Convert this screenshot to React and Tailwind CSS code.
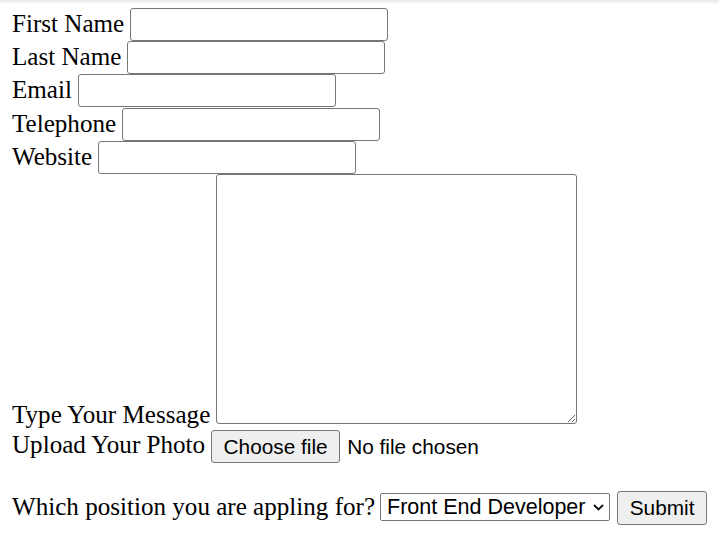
import React from 'react';

const serif = "font-['Liberation_Serif','Times_New_Roman',serif]";
const sans = "font-['Liberation_Sans',Arial,sans-serif]";

// Text fields: label + input on one line
const fields = ['First Name', 'Last Name', 'Email', 'Telephone', 'Website'];

export default function App() {
  return (
    <div className={`min-h-screen bg-white pl-[12px] pt-[8px] text-[25.1px] leading-[1.149] text-black ${serif} shadow-[inset_0_4px_4px_-3px_rgba(0,0,0,0.14)]`}>
      <form onSubmit={(e) => e.preventDefault()}>
        {fields.map((f) => (
          <label key={f} className="flex h-[33.2px] items-start gap-[6px]">
            <span className="pt-[2px]">{f}</span>
            <input
              type="text"
              className={`h-[33px] w-[258px] rounded-[3px] border border-[#767676] bg-white px-[3px] text-[20.8px] ${sans}`}
            />
          </label>
        ))}

        {/* Message */}
        <label className="flex h-[256px] items-end gap-[6px]">
          <span>Type Your Message</span>
          <textarea className={`mb-[6px] h-[250px] w-[361px] resize rounded-[3px] border border-[#767676] bg-white p-[3px] text-[20.8px] ${sans}`} />
        </label>

        {/* Photo upload */}
        <div className="flex h-[37px] items-start">
          <span className="pt-[1px]">Upload Your Photo</span>
          <button
            type="button"
            className={`ml-[6px] mt-[0.5px] h-[33px] w-[129px] rounded-[3px] border border-[#767676] bg-[#efefef] text-[20.8px] ${sans}`}
          >
            Choose file
          </button>
          <span className={`ml-[7px] mt-[5px] text-[20.8px] ${sans}`}>No file chosen</span>
        </div>

        {/* Position + submit */}
        <div className="mt-[24.5px] flex items-start">
          <span className="pt-[2px]">Which position you are appling for?</span>
          <div className={`ml-[5px] mt-[2px] flex h-[27.4px] w-[230px] items-center rounded-[2px] border border-[#767676] bg-white pl-[6px] pr-[5px] text-[21.5px] ${sans}`}>
            <span className="flex-1 whitespace-nowrap pt-[2px] leading-none">Front End Developer</span>
            <svg width="11" height="7" viewBox="0 0 11 7" fill="none" className="ml-[5px] shrink-0">
              <path d="M1 1 L5.5 5.5 L10 1" stroke="#111" strokeWidth="1.8" />
            </svg>
          </div>
          <button
            type="submit"
            className={`ml-[7px] h-[33.4px] w-[90px] rounded-[3px] border border-[#767676] bg-[#efefef] text-[20.8px] ${sans}`}
          >
            Submit
          </button>
        </div>
      </form>
    </div>
  );
}
